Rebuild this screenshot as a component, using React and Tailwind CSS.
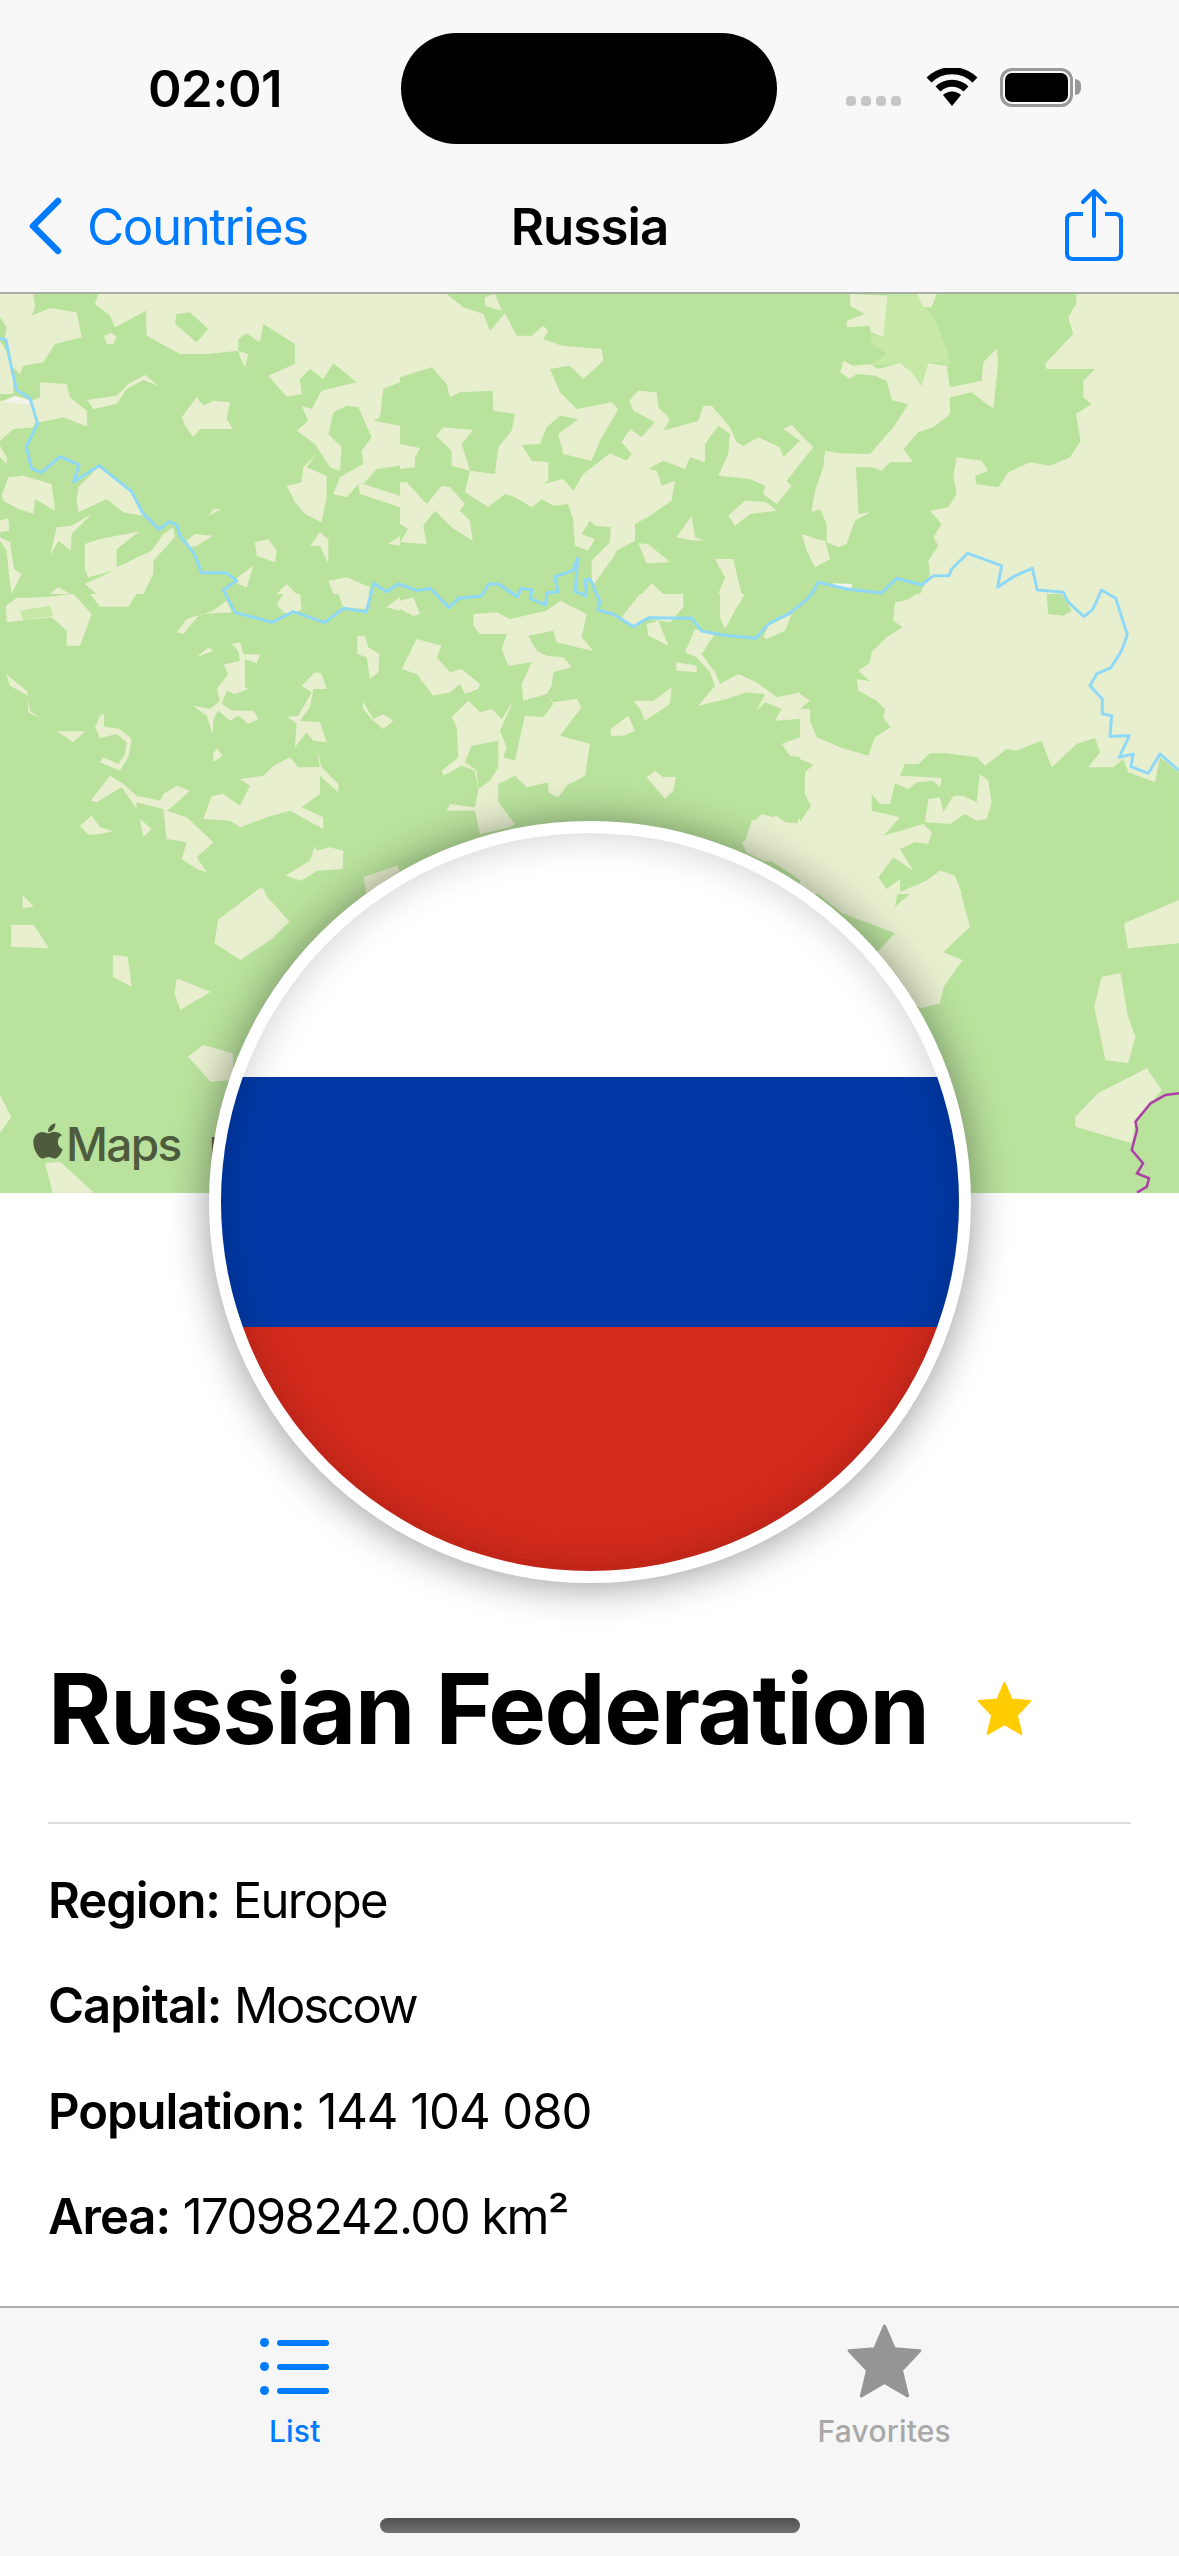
import React from "react";
import { FaApple } from "react-icons/fa";

const q1 = [
"0,0 100,0 105,40 95,65 150,42 230,55 245,130 165,150 130,205 70,215 60,240 30,210 15,130 20,100 0,70",
"0,140 18,170 40,240 40,300 0,300",
"0,320 95,320 105,385 100,400 40,405 0,440",
"120,265 200,270 210,310 260,350 262,398 190,370 120,385 105,385 95,320 120,310",
"295,0 1200,0 1200,265 1150,285 1140,370 1120,380 1200,395 1200,515 1130,525 1090,570 1200,605 1200,640 1080,600 1075,570 1040,610 1000,600 1020,550 1090,510 1085,470 1115,430 1075,340 1040,335 1000,355 985,420 1025,460 1020,530 990,520 945,450 890,410 925,380 905,335 935,345 965,290 1070,265 1000,208 970,255 930,225 900,255 905,300 860,308 805,245 885,210 885,150 790,90 780,145 740,118 715,135 715,170 620,180 540,180 440,125 438,50 345,100 330,65 285,30",
"715,170 745,180 735,220 720,190",
"312,125 335,117 350,130 340,150 320,150",
"262,318 350,305 385,270 435,243 475,275 430,258 380,285 350,330 280,345",
"545,370 590,310 610,335 640,320 690,325 680,375 698,405 600,405 580,430 555,395",
"5,605 25,550 70,545 155,570 165,650 105,615 100,660 55,645 10,620",
"0,455 20,490 20,510 0,490",
"0,680 25,672 28,710 0,715",
"0,730 30,745 42,825 65,840 35,900 30,870 20,770 0,740",
"235,580 295,520 395,590 430,665 370,655 320,615 235,655 230,620",
"150,785 170,700 215,695 275,660 215,720 212,770 175,740",
"255,750 300,735 420,712 350,765 350,820 455,770 490,720 520,700 525,730 460,800 460,840 430,900 290,900 255,870 340,830 265,850 255,825",
"560,740 585,720 640,725 590,755 570,760",
"610,685 640,645 665,645 625,665",
"765,745 805,735 830,770 825,805 770,785",
"930,755 960,715 985,735 985,810 960,755",
"860,575 905,565 910,520 950,480 920,520 980,545 980,610 965,685 915,660 885,625",
"1165,750 1200,725 1200,755",
"985,860 1040,850 1110,880 1105,900 1000,900",
"150,900 175,880 210,900",
"830,900 860,870 890,900",
"700,860 760,815 740,880 715,870",
];

const q2 = [
"0,0 140,0 190,40 250,60 270,110 315,58 350,125 395,125 430,95 445,110 430,135 485,155 605,165 610,200 550,255 510,215 450,225 480,295 530,345 635,325 655,345 600,440 575,500 490,480 475,420 535,375 480,365 440,400 420,450 365,452 395,500 445,505 445,560 430,570 490,555 520,590 550,540 630,478 680,500 695,480 665,445 690,405 725,430 765,385 700,350 688,320 715,290 770,295 775,340 810,375 790,410 895,380 910,335 935,335 990,400 1010,445 1030,455 1075,430 1140,460 1150,490 1200,440 1200,510 1160,560 1175,575 1130,630 1090,600 1095,575 1050,555 955,545 985,480 990,420 955,395 915,450 915,505 870,490 855,525 790,500 745,525 770,530 785,575 825,560 815,620 750,665 705,690 705,740 650,770 640,790 575,880 575,800 630,745 632,700 585,695 570,680 545,720 585,735 565,770 525,755 520,680 505,630 460,635 425,615 395,640 345,610 315,600 265,640 195,595 210,530 285,540 295,460 335,410 345,360 280,350 278,290 180,295 150,310 140,270 95,220 0,250",
"255,10 285,0 305,50 255,35",
"108,425 130,400 220,408 185,450 210,530 155,515 155,470",
"0,450 60,462 45,490 45,520 0,525",
"0,565 20,565 80,630 125,575 150,580 195,630 180,650 210,680 218,740 155,700 105,650 70,695 80,750 0,745 25,705 0,690",
"985,665 1035,620 1100,625 1130,650 1050,660 1005,695",
"830,730 875,665 885,730 915,740 870,738",
"715,748 745,750 810,805 740,808",
"945,795 1000,795 1025,900 955,900 975,850",
"725,900 755,868 790,900",
"1150,405 1175,392 1200,420 1200,440",
];

const q3 = [
"18,35 50,12 130,10 220,0 275,60 240,155 200,155 200,110 155,70 60,80 20,85",
"270,0 410,0 385,38 300,38",
"830,30 850,0 900,0 905,45 880,60 850,55",
"1015,0 1115,0 1100,45 1030,40",
"1160,40 1200,10 1200,50",
"530,115 560,75 640,50 680,20 695,55 600,60 550,120",
"590,190 625,160 640,170",
"695,150 720,145 730,180 780,182 770,208 735,195 735,280 745,285 705,300 680,290 665,330 700,350 760,350 775,375 745,390 715,365 690,380 655,350 640,375 638,420 620,365 580,335 630,345 660,320 650,285 685,240 670,212 720,200 715,170",
"905,275 945,235 965,240 980,285 940,285 930,340 900,380 960,385 980,445 940,440 920,415 885,460 890,390 862,368 895,365 935,295",
"1072,125 1095,125 1105,160 1138,180 1135,235 1110,255 1100,190 1072,180",
"1088,320 1120,375 1150,360 1180,380 1150,405 1115,375 1090,345",
"18,240 80,290 85,305 30,275",
"85,315 90,350 120,372 85,355",
"172,412 255,412 220,445",
"300,365 312,360 312,398 360,405 395,435 385,490 360,530 300,505 310,490 355,510 375,480 380,445 350,420 300,432 285,400",
"640,480 650,462 668,485 640,505",
"950,465 965,520 1015,570 1015,595 960,545 960,600 905,640 970,670 970,705 870,650 800,670 720,700 690,680 610,675 635,605 670,600 720,635 750,575 720,555 790,545 820,515 870,490 895,520 960,520",
"272,620 330,545 370,570 410,605 480,620 490,600 530,575 570,590 515,640 500,650 560,670 640,745 590,790 620,835 590,825 545,795 560,745 500,735 490,645 410,625 410,645 365,580 290,625",
"420,675 455,705 430,730",
"240,695 275,665 300,700 340,712 300,720 265,722",
"855,845 930,800 945,755 950,770 990,760 1030,770 1028,825 950,830 905,860",
"765,900 785,880 800,900",
"1090,850 1190,815 1200,830 1100,900",
];

const q4 = [
"0,20 40,10 60,60 40,65 0,45",
"220,60 290,55 330,75 440,50 480,20 560,60 545,130 580,170 530,160 470,145 460,110 385,125 410,170 440,185 490,190 515,220 460,235 455,275 440,300 460,325 530,315 545,340 480,425 570,450 555,545 500,575 475,610 445,595 445,565 380,580 345,545 295,570 295,625 345,690 330,700 240,720 225,650 140,650 150,630 225,640 235,590 225,530 185,515 130,545 125,530 175,490 170,400 155,370 205,320 240,355 275,345 305,375 340,320 300,410 320,460 310,490 345,500 360,430 375,365 430,370 460,330 440,300 370,320 365,270 395,205 325,215 305,165 320,120 240,120 220,95",
"5,225 50,135 125,155 110,190 150,235 185,225 240,270 235,285 195,300 180,270 150,295 100,305 50,240",
"665,70 720,0 850,0 850,40 810,85 745,75 695,95",
"740,90 775,80 805,155 745,125",
"960,0 1035,0 1005,50 975,105 960,70",
"1090,130 1105,95 1175,60 1155,110 1100,135",
"855,175 885,105 945,120 905,180 945,235 960,270 1015,240 1070,265 1130,310 1200,295 1200,375 1125,380 1145,345 1095,325 1070,350 1095,300 1040,295 980,315 895,335 945,275 930,235 890,190",
"828,205 890,215 890,235 830,230",
"700,320 760,320 815,280 810,330 735,380 720,345",
"632,405 685,365 705,410 670,425 632,425",
"740,550 765,530 790,550 828,548 820,590 795,615",
"1145,450 1200,430 1200,490 1170,485",
"1055,690 1085,660 1120,670 1130,665 1200,720 1200,830 1170,800 1165,740 1120,700 1060,710",
"1025,745 1060,730 1115,765 1135,805 1090,800 1040,775",
];

const q5 = [
"830,0 1137,0 1137,900 360,900 390,840 385,800 415,755 400,730 425,690 390,650 445,640 470,600 460,545 470,490 545,500 565,530 525,545 530,570 595,580 625,535 690,505 750,515 810,490 842,440 828,360 875,330 850,310 850,260 885,225 740,225 735,210 820,120 805,70 828,30",
"150,0 262,5 250,130 212,115 210,95 140,100 140,80 195,60 150,35",
"350,0 410,0 395,40 370,40",
"120,235 130,200 160,215 210,210 235,225 300,207 335,235 365,275 385,208 440,215 450,280 545,260 550,205 590,165 595,205 580,345 515,295 450,310 450,360 400,400 355,415 310,465 340,505 270,505 245,530 215,520 168,520 175,660 210,655 165,680 140,750 115,760 80,745 80,690 60,645 35,655 45,590 70,520 75,470 120,478 210,480 280,400 325,330 275,318 260,260 225,245 170,240 150,255",
"0,420 40,460 0,510",
"5,720 50,735 75,740 90,795 45,820 20,770",
];

const q6Green = [
"0,0 350,0 320,18 285,25 280,80 308,100 260,130 215,175 210,205 175,230 210,262 170,255 175,290 230,320 255,345 250,370 272,400 225,430 205,485 120,460 50,430 30,380 30,345 0,345 30,320 0,300",
"0,495 40,512 15,535 15,600 33,635 0,685",
"740,0 785,0 815,50 790,65 745,60",
"300,545 315,510 355,510 390,478 440,478 530,490 555,515 620,465 650,470 725,440 755,520 830,450 885,432 900,475 865,520 940,520 970,495 985,535 1065,565 1080,490 1137,535 1137,900 485,900 465,845 420,830 380,860 300,895 300,855 260,885 235,850 280,790 340,830 300,765 345,745 385,750 395,715 370,690 250,725 300,670 215,650 215,600 240,630 270,630 285,568 325,585 350,565 400,560 420,580 425,552",
];

const lower = [
"290,360 345,265 385,365 360,420 320,480 285,430",
"150,465 170,470 175,560 150,530",
"235,535 280,575 240,630 232,580",
"30,285 45,320 30,325",
"15,375 45,375 65,445 15,440",
"250,770 270,735 310,760 310,840 280,845",
"0,885 15,950 0,1000",
"60,1090 80,1085 125,1178 70,1178",
"1075,0 1060,70 1000,60 990,130 1030,190 1070,250 1120,340 1190,400 1220,530 1290,380 1270,220 1245,215 1190,320 1200,210 1170,230 1190,170 1210,130 1240,90 1300,60 1320,0",
"1140,520 1190,400 1280,480 1255,560 1250,610 1225,625",
"1495,370 1568,300 1568,430 1500,445",
"1465,530 1490,520 1500,650 1510,710 1500,790 1470,780 1455,620",
"1430,950 1460,880 1525,805 1545,870 1510,965 1505,1030 1430,980",
];

const river = "0,145 8,150 15,230 22,300 40,325 50,400 35,470 42,535 55,548 80,500 105,525 98,575 132,527 175,605 190,670 212,718 225,695 235,705 240,740 258,790 268,848 300,848 315,872 297,900 313,968 362,997 390,965 432,998 457,955 487,966 497,880 514,905 530,882 555,902 572,895 597,953 610,925 640,918 650,882 663,882 688,920 693,895 708,900 705,925 725,945 728,908 742,905 738,860 762,842 768,805 765,905 780,918 778,870 785,868 798,935 795,960 815,972 842,1010 863,983 920,985 933,1023 960,1035 1005,1045 1023,1000 1050,970 1075,925";
const riverRight = "25,912 35,900 55,865 140,885 245,897 290,853 365,873 400,845 447,845 455,825 503,778 605,815 593,880 640,848 697,823 712,888 790,895 805,925 852,968 878,947 905,888 925,900 947,912 982,1022 965,1070 932,1122 890,1140 870,1175 907,1215 907,1260 935,1265 930,1328 988,1325 958,1390 1000,1380 993,1418 1045,1438 1080,1380 1137,1430";

const CREAM = "#e8efcf";
const GREEN = "#b9e29d";

function Patches({ list, fill = CREAM }) {
  return list.map((p, i) => <polygon key={i} points={p} fill={fill} />);
}

function MapArt() {
  return (
    <svg width="1179" height="899" viewBox="0 0 1179 899" className="block">
      <rect width="1179" height="899" fill={GREEN} />
      <g transform="scale(0.3333)">
        <Patches list={q1} />
        <polygon points="530,60 570,55 625,105 590,145 525,90" fill={GREEN} />
        <polygon points="10,320 45,305 95,320 95,332 20,325" fill="#f2f3ea" />
      </g>
      <g transform="translate(400,0) scale(0.3333)"><Patches list={q2} /></g>
      <g transform="translate(0,300) scale(0.3333)">
        <Patches list={q3} />
        <polygon points="60,50 150,35 160,65 70,80" fill="#c6e9a8" />
      </g>
      <g transform="translate(400,300) scale(0.3333)">
        <Patches list={q4} />
        <polygon points="215,455 295,440 295,520 270,560 235,585 230,530 195,505" fill={GREEN} />
      </g>
      <g transform="translate(0,506) scale(0.752,0.3333)">
        <Patches list={lower} />
        <polyline points="1568,880 1550,885 1530,910 1510,965 1512,990 1505,1050 1520,1090 1512,1120 1528,1135 1525,1160 1512,1178" fill="none" stroke="#ad3da8" strokeWidth="2.5" vectorEffect="non-scaling-stroke" />
      </g>
      <g transform="translate(800,0) scale(0.3333)">
        <rect width="1137" height="900" fill={GREEN} />
        <polygon points="260,0 350,0 375,40 410,85 440,170 450,210 395,205 370,275 310,210 210,215 260,180 215,150 210,120 250,130" fill="#c6e9a8" />
        <Patches list={q5} />
        <polygon points="100,868 155,870 155,882 105,875" fill="#f2f3ea" />
      </g>
      <g transform="translate(800,300) scale(0.3333)">
        <rect width="1137" height="900" fill={CREAM} clipPath="none" />
        <Patches list={q6Green} fill={GREEN} />
        <polygon points="375,685 385,615 420,610 430,655 460,605 490,605 530,625 540,540 565,560 575,625 560,675 530,680 495,660 450,690" fill={CREAM} />
        <polygon points="465,845 420,830 380,860 300,895 300,900 485,900" fill={CREAM} />
      </g>
      <g transform="translate(0,-4) scale(0.752,0.3333)">
        <polyline points={river} fill="none" stroke="#8fd9f7" strokeWidth="3" vectorEffect="non-scaling-stroke" strokeLinejoin="round" />
      </g>
      <g transform="translate(800,0) scale(0.3333)">
        <polyline points={riverRight} fill="none" stroke="#8fd9f7" strokeWidth="3" vectorEffect="non-scaling-stroke" strokeLinejoin="round" />
      </g>
    </svg>
  );
}

function Star({ className, color, w = 3 }) {
  return (
    <svg viewBox="0 0 79 74" className={className}>
      <polygon points="39.5,3 49,25 74,27 56,46 62,71 39.5,58 17,71 23,46 5,27 30,25" fill={color} stroke={color} strokeWidth={w} strokeLinejoin="round" />
    </svg>
  );
}

function Row({ label, value, valueClass = "", className = "" }) {
  return (
    <p className={`h-[105.3px] leading-[62px] text-[49px] text-black tracking-[-1.05px] ${className}`}>
      <span className="font-semibold">{label}</span> <span className={valueClass}>{value}</span>
    </p>
  );
}

export default function App() {
  return (
    <div className="flex flex-col w-[1179px] h-[2556px] overflow-hidden bg-white font-['Inter',sans-serif]">
      <header className="shrink-0 h-[294px] bg-[#f8f8f8] border-b-2 border-[#a9aea4]">
        <div className="flex items-center h-[177px]">
          <div className="w-[401px] pl-[148px] text-[51px] font-semibold leading-none text-black tracking-[-0.6px]">02:01</div>
          <div className="w-[376px] h-[111px] rounded-full bg-black" />
          <div className="flex items-start h-[40px] ml-[69px]">
            <div className="flex gap-[5px] mt-[27px] w-[80px]">
              {[0, 1, 2, 3].map((i) => <span key={i} className="w-[10px] h-[10px] rounded-[4px] bg-[#c6c6c6]" />)}
            </div>
            <svg width="52" height="38" viewBox="0 0 52 38" className="block -mt-[1px]">
              <path d="M3 12 A33 33 0 0 1 49 12" fill="none" stroke="#000" strokeWidth="7" />
              <path d="M12 21 A20 20 0 0 1 40 21" fill="none" stroke="#000" strokeWidth="7" />
              <path d="M17 27 A13 13 0 0 1 35 27 L26 38 Z" fill="#000" />
            </svg>
            <div className="flex items-center ml-[22px] -mt-[1px]">
              <div className="w-[73px] h-[39px] rounded-[12px] border-[3px] border-[#999] p-[2px]">
                <div className="w-full h-full rounded-[7px] bg-black" />
              </div>
              <div className="w-[6px] h-[16px] ml-[2px] rounded-r-full bg-[#999]" />
            </div>
          </div>
        </div>
        <div className="flex items-center h-[96px]">
          <div className="flex items-center w-[345px] pl-[28px] pt-[3px]">
            <svg width="34" height="58" viewBox="0 0 34 58" className="-mt-[2px]">
              <path d="M30 4 L5 29 L30 54" fill="none" stroke="#007aff" strokeWidth="6.5" strokeLinecap="round" strokeLinejoin="round" />
            </svg>
            <span className="ml-[25px] text-[51px] leading-none text-[#007aff] tracking-[-1.45px]">Countries</span>
          </div>
          <div className="w-[489px] pt-[2px] text-center text-[51px] font-semibold leading-none text-black tracking-[-0.95px]">Russia</div>
          <svg width="60" height="72" viewBox="0 0 60 72" className="ml-[230px] mt-[2px] overflow-visible">
            <path d="M19 24 H9 Q3 24 3 30 V63 Q3 69 9 69 H51 Q57 69 57 63 V30 Q57 24 51 24 H41" fill="none" stroke="#007aff" strokeWidth="4" />
            <path d="M30 46 V1 M19 12 L30 1 L41 12" fill="none" stroke="#007aff" strokeWidth="4" strokeLinecap="round" strokeLinejoin="round" />
          </svg>
        </div>
      </header>

      <main className="flex-1 min-h-0 overflow-hidden">
        <div className="relative h-[899px]">
          <MapArt />
          <div className="absolute left-[30px] bottom-[26px] flex items-center text-[#4e5b3d]">
            <FaApple className="w-[36px] h-[40px] -mt-[6px]" />
            <span className="text-[46px] leading-none font-medium tracking-[-1.7px]">Maps</span>
          </div>
          <span className="absolute left-[209px] bottom-[26px] text-[34px] leading-none text-[#4e5b3d]">Legal</span>
        </div>
        <div className="relative mx-auto -mt-[372px] w-[762px] h-[762px] rounded-full bg-white p-[12px] shadow-[0_2px_40px_rgba(0,0,0,0.42)]">
          <div className="relative w-full h-full rounded-full overflow-hidden flex flex-col">
            <div className="h-[244px] bg-white" />
            <div className="h-[250px] bg-[#0039a6]" />
            <div className="flex-1 bg-[#d42a1c]" />
            <div className="absolute inset-0 rounded-full shadow-[inset_0_0_40px_rgba(0,0,0,0.2)]" />
          </div>
        </div>
        <div className="px-[48px]">
          <div className="flex items-center h-[200px] pt-[50px]">
            <h1 className="text-[97px] leading-none font-bold text-black tracking-[-1.4px]">Russian Federation</h1>
            <Star className="w-[59px] h-[55px] ml-[46px]" color="#ffcc00" />
          </div>
          <div className="h-[2px] mt-[39px] bg-[#dcdcdc]" />
          <div className="pt-[46px]">
            <Row label="Region:" value="Europe" valueClass="tracking-[-1.6px]" />
            <Row label="Capital:" value="Moscow" valueClass="tracking-[-2.3px]" />
            <Row label="Population:" value="144 104 080" />
            <Row label="Area:" value="17098242.00 km²" valueClass="tracking-[-1.6px]" />
            <Row label="Currency:" value="RUB" className="pt-[3px]" />
          </div>
        </div>
      </main>

      <footer className="shrink-0 h-[250px] bg-[#f6f6f6] border-t-2 border-[#b0b0b0]">
        <div className="grid grid-cols-2 h-[210px]">
          <div className="flex flex-col items-center pt-[30px]">
            <div className="flex flex-col gap-[15px] h-[62px]">
              {[0, 1, 2].map((i) => (
                <div key={i} className="flex items-center gap-[8px]">
                  <span className="w-[9px] h-[9px] rounded-full bg-[#007aff]" />
                  <span className="w-[52px] h-[6px] rounded-full bg-[#007aff]" />
                </div>
              ))}
            </div>
            <span className="mt-[16px] text-[30px] leading-none font-medium text-[#007aff] tracking-[0.2px]">List</span>
          </div>
          <div className="flex flex-col items-center pt-[16px]">
            <Star className="w-[81px] h-[76px] -mt-[1px]" color="#959595" />
            <span className="mt-[17px] text-[30px] leading-none font-medium text-[#a8a8a8] tracking-[0.2px]">Favorites</span>
          </div>
        </div>
        <div className="mx-auto w-[420px] h-[15px] rounded-full bg-gradient-to-b from-[#505050] to-[#727272]" />
      </footer>
    </div>
  );
}
